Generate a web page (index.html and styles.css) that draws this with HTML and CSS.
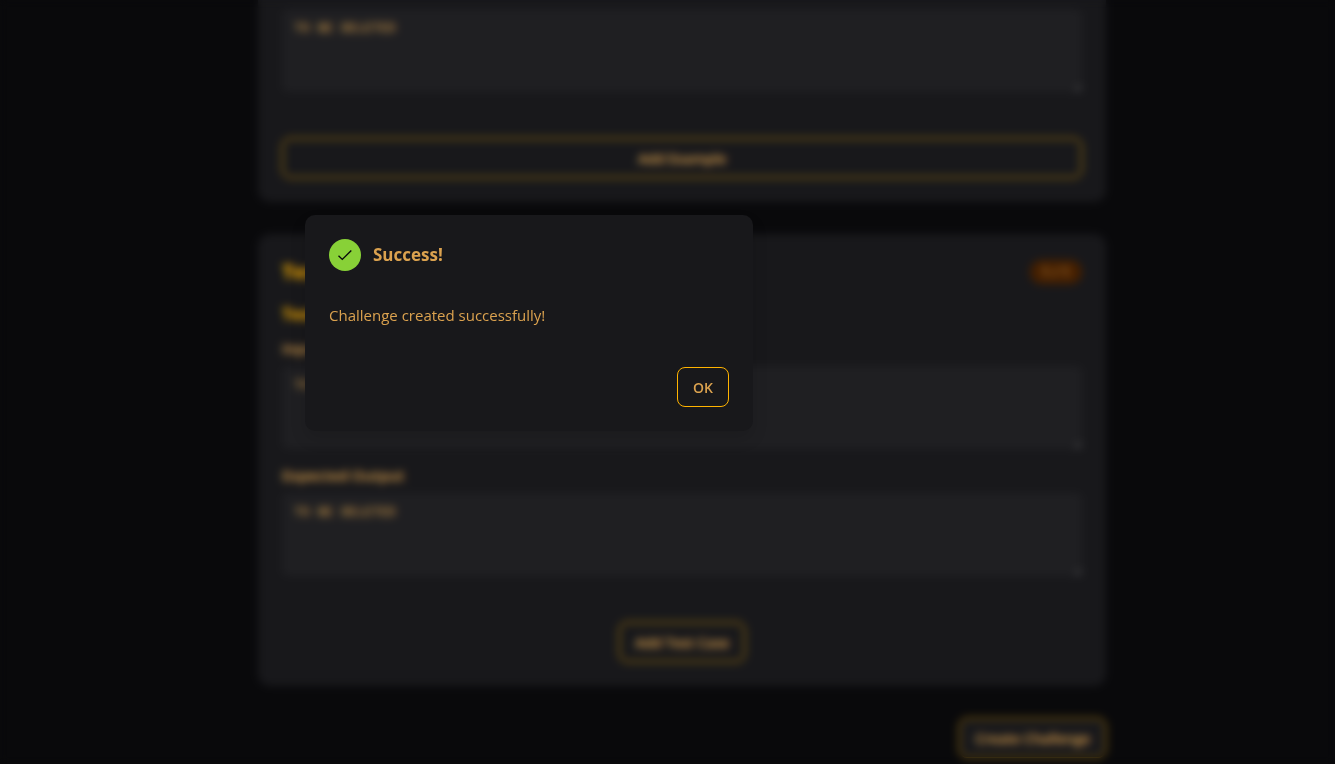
FILE: index.html
```html
<!DOCTYPE html>
<html lang="en">
<head>
  <meta charset="UTF-8" />
  <meta name="viewport" content="width=device-width, initial-scale=1.0" />
  <title>Create Challenge</title>
  <link rel="stylesheet" href="styles.css">
</head>
<body>
  <form class="page">
    <!-- Examples -->
    <section class="card">
      <div class="field">
        <label for="exampleOutput">Expected Output</label>
        <textarea id="exampleOutput">TO BE DELETED</textarea>
      </div>
      <button type="button" class="btn add-btn">Add Example</button>
    </section>

    <!-- Test cases -->
    <section class="card">
      <div class="card-header">
        <h2>Test Cases</h2>
        <span class="badge">1 / 1</span>
      </div>
      <h3>Test Case 1</h3>
      <div class="field">
        <label for="testInput">Input</label>
        <textarea id="testInput">TO BE DELETED</textarea>
      </div>
      <div class="field">
        <label for="testOutput">Expected Output</label>
        <textarea id="testOutput">TO BE DELETED</textarea>
      </div>
      <button type="button" class="btn add-btn add-btn-small">Add Test Case</button>
    </section>

    <div class="actions">
      <button type="submit" class="btn">Create Challenge</button>
    </div>
  </form>

  <!-- Success modal -->
  <div class="overlay">
    <div class="modal" role="dialog" aria-modal="true" aria-labelledby="modalTitle">
      <div class="modal-header">
        <span class="modal-icon">
          <svg width="16" height="16" viewBox="0 0 16 16" fill="none" stroke="currentColor" stroke-width="1.4">
            <path d="M1.5 8.8 5.3 12.4 14.3 3.6" />
          </svg>
        </span>
        <h2 id="modalTitle">Success!</h2>
      </div>
      <p>Challenge created successfully!</p>
      <div class="modal-actions">
        <button type="button" class="btn">OK</button>
      </div>
    </div>
  </div>
</body>
</html>
```
FILE: styles.css
```css
* {
  box-sizing: border-box;
}
body {
  margin: 0;
  min-height: 100vh;
  overflow: hidden;
  background: #09090b;
  color: #dba24f;
  font-family: "Open Sans", "Noto Sans", sans-serif;
  font-size: 15px;
  line-height: 24px;
}
h2, h3, p {
  margin: 0;
}

/* Form */
.page {
  display: flex;
  flex-direction: column;
  gap: 32px;
  width: 100%;
  max-width: 877px;
  margin: -43px auto 0;
  padding-left: 29px;
}
.card {
  display: flex;
  flex-direction: column;
  gap: 16px;
  padding: 24px;
  border-radius: 12px;
  background: #18181b;
}
.card-header {
  display: flex;
  align-items: center;
  justify-content: space-between;
}
.card-header h2 {
  font-size: 20px;
  line-height: 28px;
  color: #ffb300;
}
.card h3 {
  font-size: 16px;
  color: #ffb300;
  margin-bottom: -4px;
}
.badge {
  padding: 2px 12px;
  border-radius: 12px;
  background: #451f00;
  font-size: 14px;
  line-height: 20px;
}
.field {
  display: flex;
  flex-direction: column;
  gap: 8px;
}
.field label {
  font-weight: 600;
  line-height: 20px;
}
.field textarea {
  display: block;
  width: 100%;
  height: 83px;
  padding: 10px 12px;
  border: 0;
  border-radius: 6px;
  background: #1f1f22;
  color: inherit;
  font-family: "Liberation Mono", monospace;
  font-size: 13px;
  line-height: 20px;
  resize: vertical;
}
.btn {
  height: 40px;
  padding: 0 15px;
  border: 1px solid #ffb300;
  border-radius: 8px;
  background: #18181b;
  color: inherit;
  font-family: inherit;
  font-size: 14px;
  font-weight: 600;
  cursor: pointer;
}
.add-btn {
  margin-top: 30px;
}
.add-btn-small {
  align-self: center;
}
.actions {
  display: flex;
  justify-content: flex-end;
}

/* Modal */
.overlay {
  position: fixed;
  inset: 0;
  padding: 215px 24px 24px 305px;
  backdrop-filter: blur(4px);
}
.modal {
  display: flex;
  flex-direction: column;
  max-width: 448px;
  padding: 24px;
  border-radius: 10px;
  background: #18181b;
  box-shadow: 0 8px 16px rgba(0, 0, 0, 0.12);
}
.modal-header {
  display: flex;
  align-items: center;
  gap: 12px;
}
.modal-header h2 {
  font-size: 17px;
  line-height: 28px;
}
.modal-icon {
  display: flex;
  align-items: center;
  justify-content: center;
  width: 32px;
  height: 32px;
  border-radius: 50%;
  background: #88d137;
  color: #09090b;
}
.modal p {
  margin: 32px 0 40px;
}
.modal-actions {
  display: flex;
  justify-content: flex-end;
}
```
